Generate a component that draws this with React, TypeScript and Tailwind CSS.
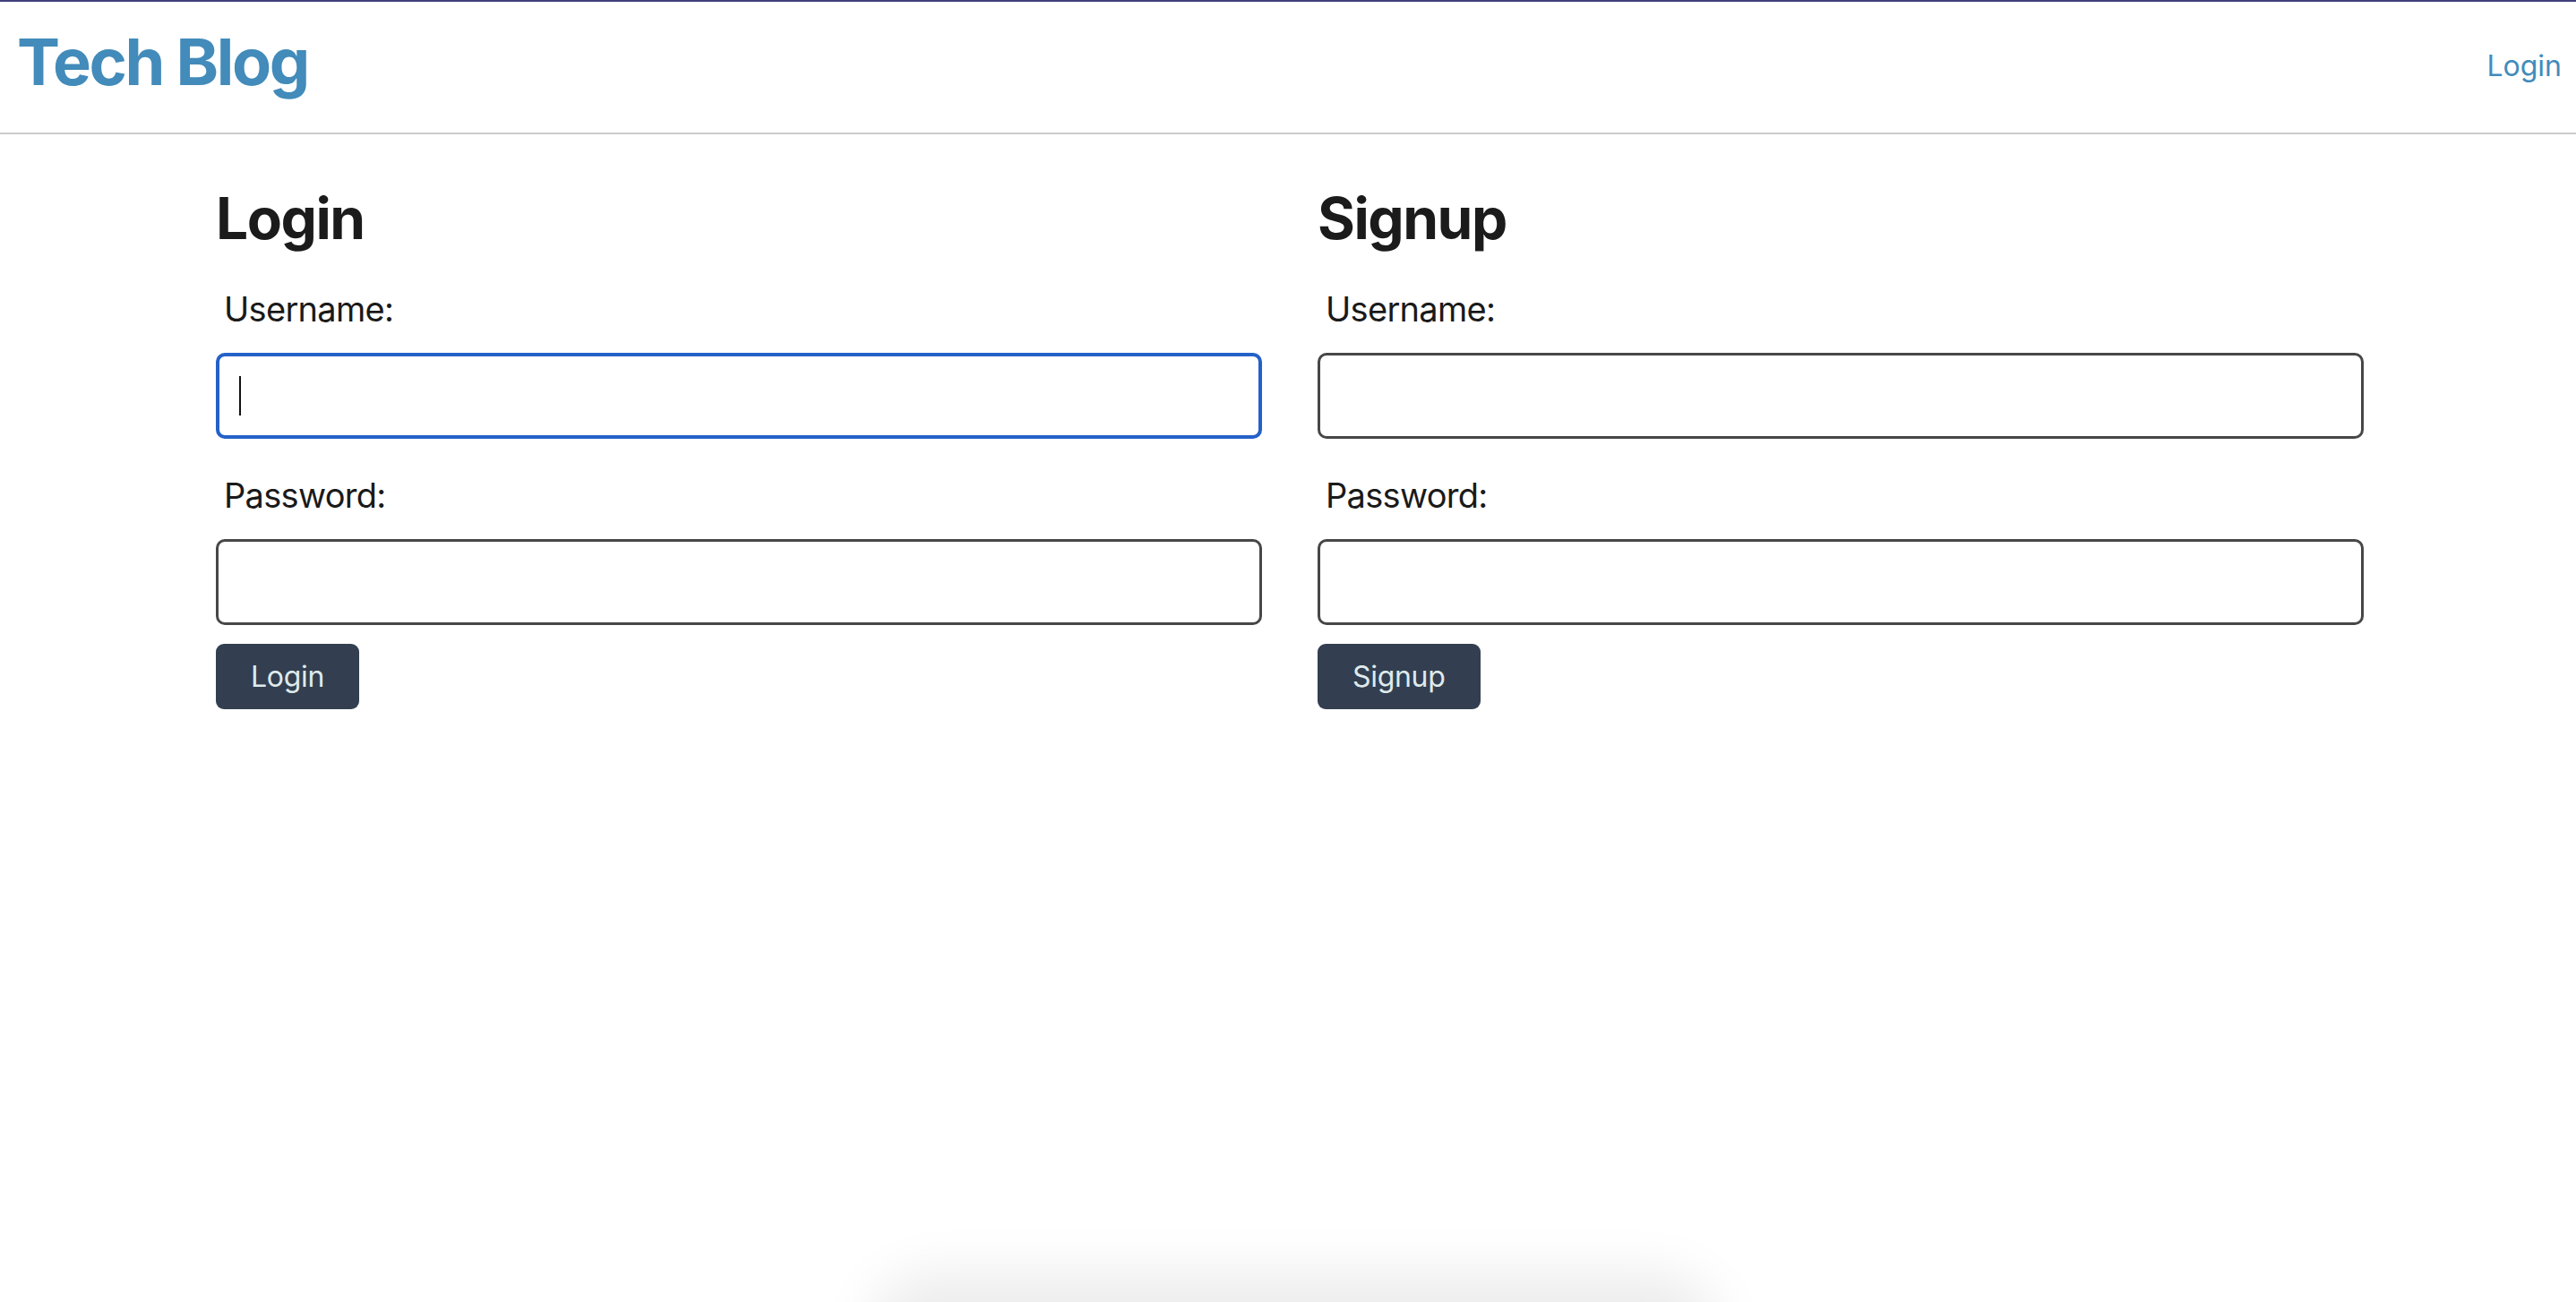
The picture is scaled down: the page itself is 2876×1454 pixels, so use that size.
import React from "react";

function Field({ label, focused, type }: { label: string; focused?: boolean; type: string }) {
  return (
    <div className="flex flex-col">
      <label className="pl-[9px] text-[38px] leading-none text-[#1a1a1a] tracking-[-0.7px]">{label}</label>
      <div
        className={
          "mt-[30px] h-[96px] rounded-[10px] bg-white flex items-center " +
          (focused ? "border-[4px] border-[#2461c8]" : "border-[3px] border-[#474747]")
        }
      >
        {focused ? <div className="ml-[22px] w-[2px] h-[44px] bg-[#111]" /> : null}
        <input type={type} className="hidden" readOnly />
      </div>
    </div>
  );
}

function FormCol({ title, button, focused }: { title: string; button: string; focused?: boolean }) {
  return (
    <div className="flex flex-col">
      <h1 className="text-[64px] font-bold leading-none text-[#1b1b1b] tracking-[-1.5px]">{title}</h1>
      <div className="mt-[50px]">
        <Field label="Username:" focused={focused} type="text" />
      </div>
      <div className="mt-[44px]">
        <Field label="Password:" type="password" />
      </div>
      <div className="mt-[21px]">
        <button className="h-[73px] px-[39px] rounded-[9px] bg-[#333f50] text-[#dfeaec] text-[32px] leading-none tracking-[-0.3px]">
          {button}
        </button>
      </div>
    </div>
  );
}

export default function App() {
  return (
    <div
      className="relative min-h-[1454px] overflow-hidden bg-white border-t-[2px] border-[#40407e]"
      style={{ fontFamily: "Inter, 'Noto Sans', sans-serif" }}
    >
      <header className="h-[148px] flex justify-between items-start border-b-[2px] border-[#cccccc]">
        <a className="pl-[19px] pt-[31px] text-[72px] font-bold leading-none text-[#428bba] tracking-[-2.4px]">
          Tech Blog
        </a>
        <a className="pr-[16px] mt-[56px] text-[32px] leading-none text-[#428bba]">Login</a>
      </header>
      <main className="pl-[241px] pr-[237px] pt-[62px] grid grid-cols-2 gap-[62px]">
        <FormCol title="Login" button="Login" focused />
        <FormCol title="Signup" button="Signup" />
      </main>
      <div className="absolute left-[1010px] w-[870px] top-[1460px] h-[60px] rounded-full bg-black/10 shadow-[0_0_60px_40px_rgba(0,0,0,0.08)]" />
    </div>
  );
}
